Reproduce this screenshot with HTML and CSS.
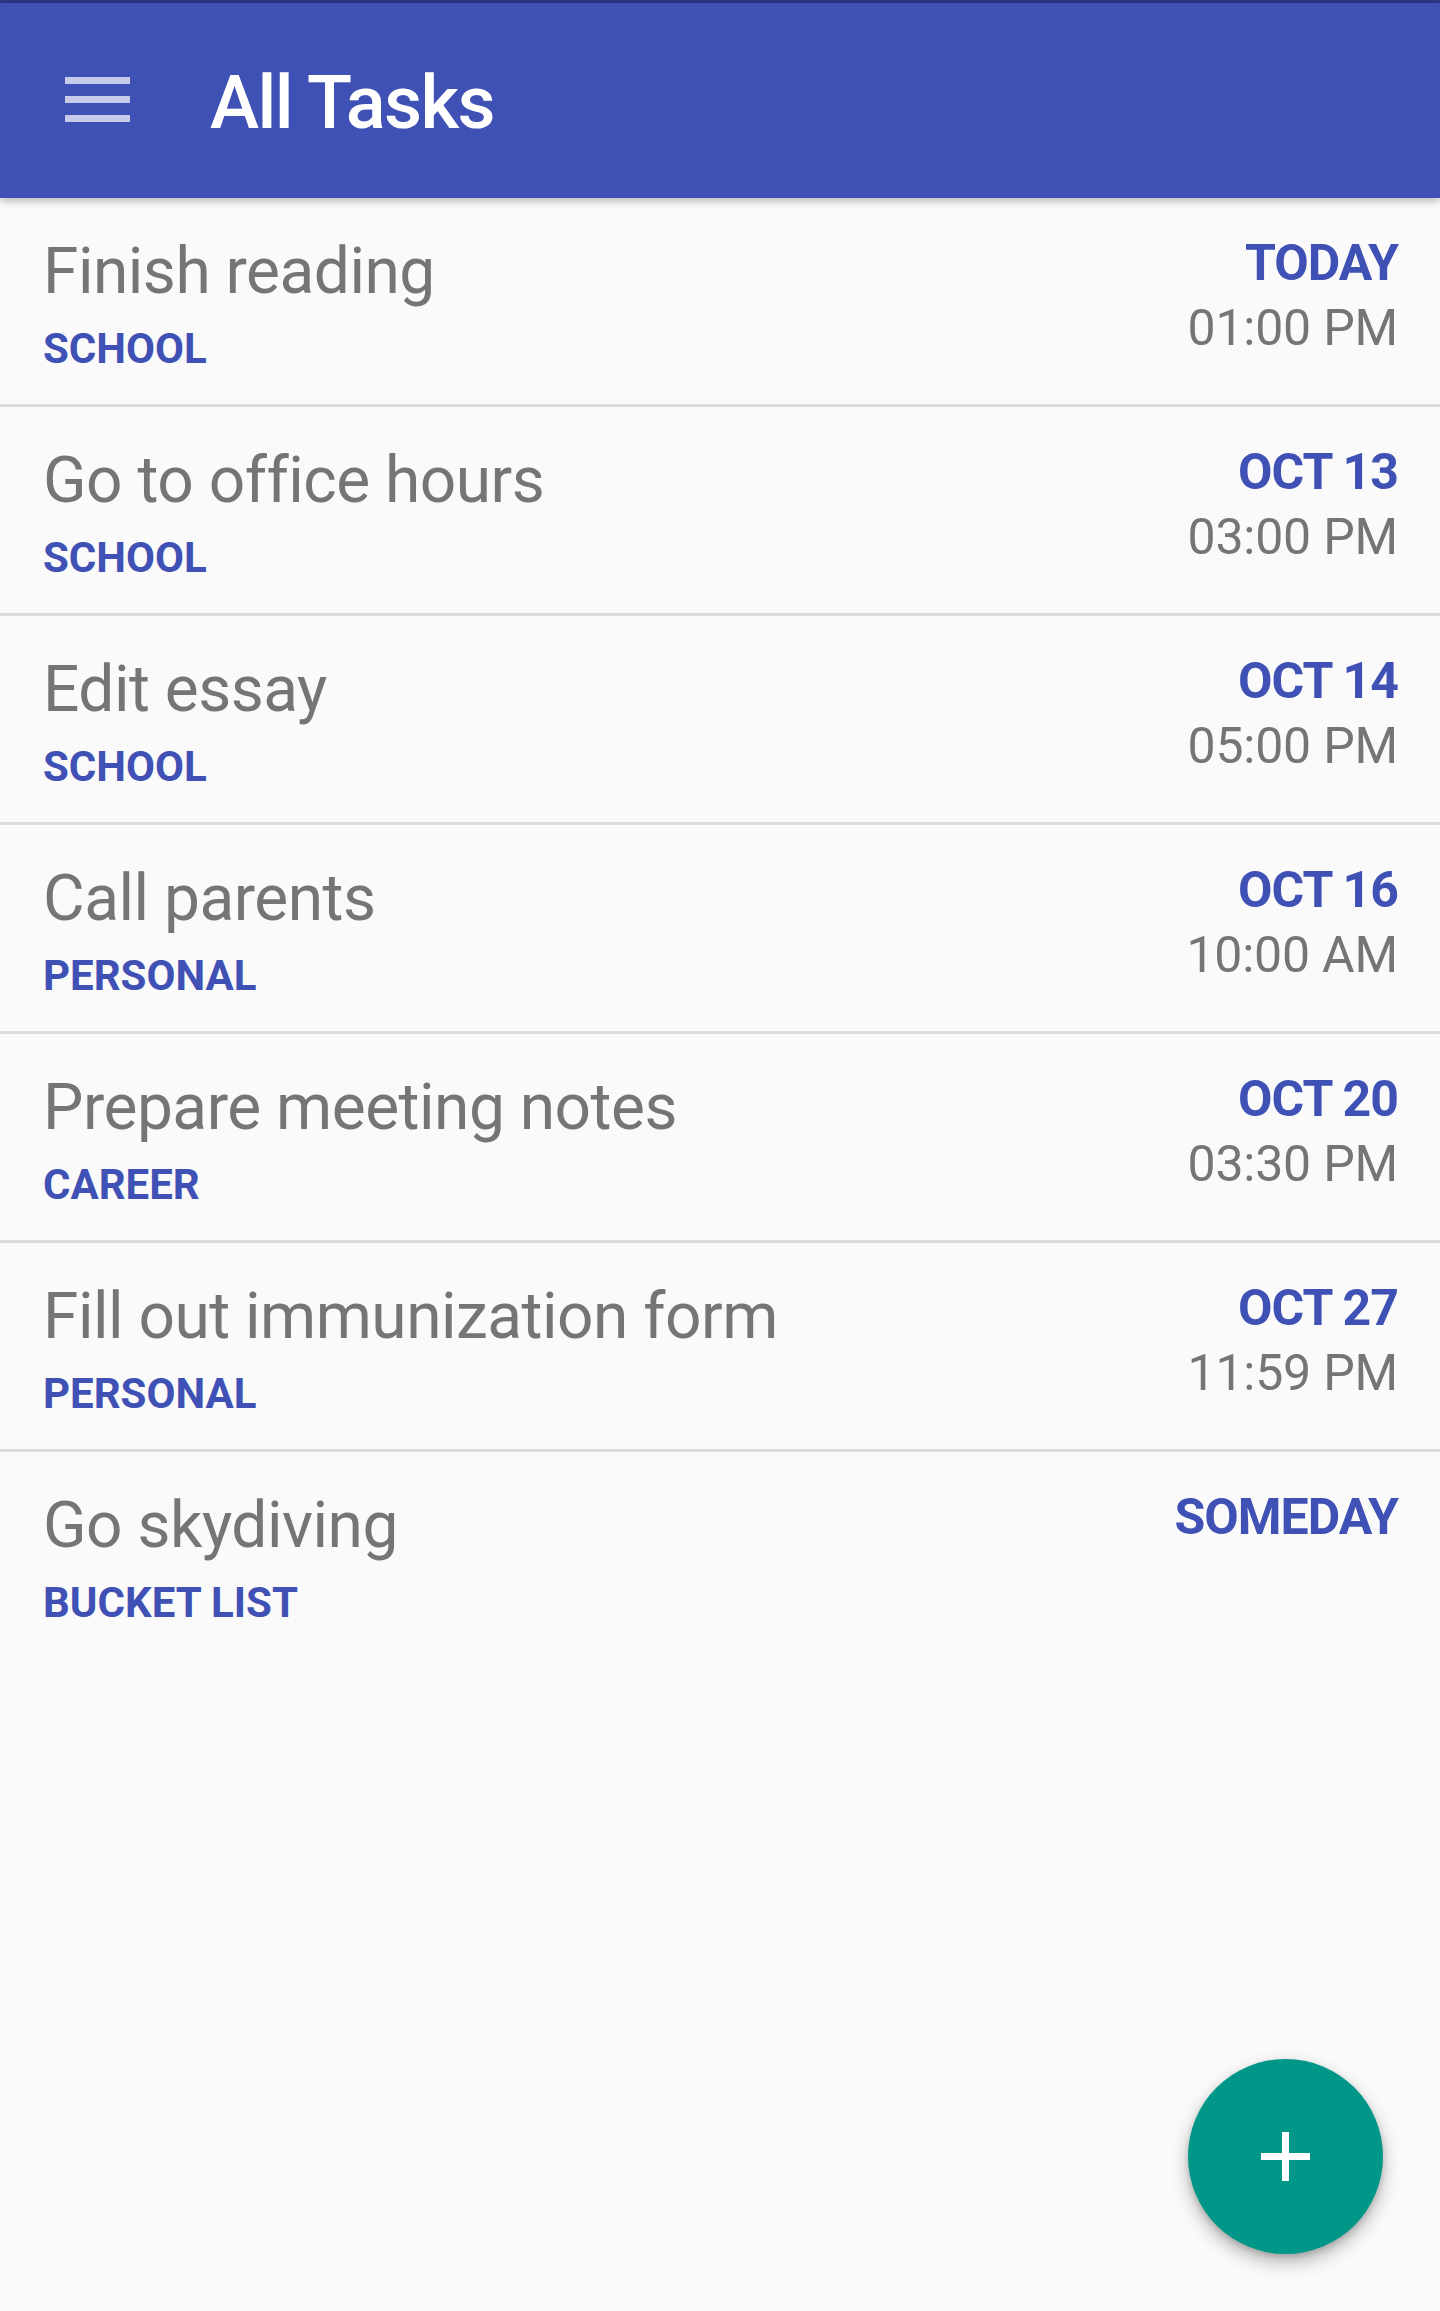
FILE: index.html
```html
<!DOCTYPE html>
<html lang="en">
<head>
<meta charset="utf-8">
<title>All Tasks</title>
<link rel="stylesheet" href="styles.css">
</head>
<body>
<div class="status-strip"></div>
<header class="appbar">
  <svg class="menu-icon" width="65" height="45" viewBox="0 0 65 45" aria-hidden="true">
    <rect x="0" y="0" width="65" height="7"/>
    <rect x="0" y="19" width="65" height="7"/>
    <rect x="0" y="38" width="65" height="7"/>
  </svg>
  <h1 class="appbar-title">All Tasks</h1>
</header>
<main class="task-list">
  <div class="task">
    <div class="task-main"><div class="task-title">Finish reading</div><div class="task-cat">SCHOOL</div></div>
    <div class="task-when"><div class="task-date">TODAY</div><div class="task-time">01:00 PM</div></div>
  </div>
  <div class="task">
    <div class="task-main"><div class="task-title">Go to office hours</div><div class="task-cat">SCHOOL</div></div>
    <div class="task-when"><div class="task-date">OCT 13</div><div class="task-time">03:00 PM</div></div>
  </div>
  <div class="task">
    <div class="task-main"><div class="task-title">Edit essay</div><div class="task-cat">SCHOOL</div></div>
    <div class="task-when"><div class="task-date">OCT 14</div><div class="task-time">05:00 PM</div></div>
  </div>
  <div class="task">
    <div class="task-main"><div class="task-title">Call parents</div><div class="task-cat">PERSONAL</div></div>
    <div class="task-when"><div class="task-date">OCT 16</div><div class="task-time">10:00 AM</div></div>
  </div>
  <div class="task">
    <div class="task-main"><div class="task-title">Prepare meeting notes</div><div class="task-cat">CAREER</div></div>
    <div class="task-when"><div class="task-date">OCT 20</div><div class="task-time">03:30 PM</div></div>
  </div>
  <div class="task">
    <div class="task-main"><div class="task-title">Fill out immunization form</div><div class="task-cat">PERSONAL</div></div>
    <div class="task-when"><div class="task-date">OCT 27</div><div class="task-time">11:59 PM</div></div>
  </div>
  <div class="task task-last">
    <div class="task-main"><div class="task-title">Go skydiving</div><div class="task-cat">BUCKET LIST</div></div>
    <div class="task-when"><div class="task-date">SOMEDAY</div></div>
  </div>
</main>
<button class="fab" aria-label="Add task">
  <svg width="49" height="49" viewBox="0 0 49 49" aria-hidden="true">
    <rect x="0" y="21" width="49" height="7"/>
    <rect x="21" y="0" width="7" height="49"/>
  </svg>
</button>
</body>
</html>
```
FILE: styles.css
```css
html, body {
  margin: 0;
  padding: 0;
}
body {
  background: #fafafa;
  font-family: Roboto, "Noto Sans", "Liberation Sans", sans-serif;
  min-height: 2311px;
}
.status-strip {
  height: 3px;
  background: #2b3783;
}
.appbar {
  position: relative;
  z-index: 2;
  height: 195px;
  background: #3f51b5;
  display: flex;
  align-items: center;
  box-shadow: 0 3px 8px rgba(0, 0, 0, 0.28);
}
.menu-icon {
  margin-left: 65px;
  margin-top: -3px;
  fill: rgba(255, 255, 255, 0.7);
  flex: none;
}
.appbar-title {
  margin: 0 0 0 80px;
  padding-top: 5px;
  font-size: 74px;
  line-height: 74px;
  font-weight: 500;
  letter-spacing: -1.6px;
  color: #ffffff;
}
.task-list {
  display: flex;
  flex-direction: column;
}
.task {
  display: flex;
  justify-content: space-between;
  height: 209px;
  box-sizing: border-box;
  border-bottom: 3px solid #dcdcdc;
  padding: 0 42px 0 43px;
}
.task-last {
  border-bottom: none;
}
.task-main {
  padding-top: 42px;
}
.task-title {
  font-size: 64px;
  line-height: 64px;
  letter-spacing: -0.5px;
  color: #757575;
  white-space: nowrap;
}
.task-cat {
  margin-top: 24px;
  font-size: 42px;
  line-height: 42px;
  font-weight: 700;
  color: #3f51b5;
}
.task-when {
  padding-top: 40px;
  text-align: right;
}
.task-date {
  font-size: 50px;
  line-height: 50px;
  font-weight: 700;
  letter-spacing: -1px;
  color: #3f51b5;
}
.task-time {
  margin-top: 15px;
  font-size: 50px;
  line-height: 50px;
  letter-spacing: -0.2px;
  color: #757575;
}
.fab {
  position: fixed;
  right: 57px;
  bottom: 57px;
  width: 195px;
  height: 195px;
  border: none;
  border-radius: 50%;
  padding: 0;
  background: #009688;
  box-shadow: 0 8px 18px rgba(0, 0, 0, 0.28), 0 3px 6px rgba(0, 0, 0, 0.15);
  display: flex;
  align-items: center;
  justify-content: center;
  fill: #ffffff;
}
```
